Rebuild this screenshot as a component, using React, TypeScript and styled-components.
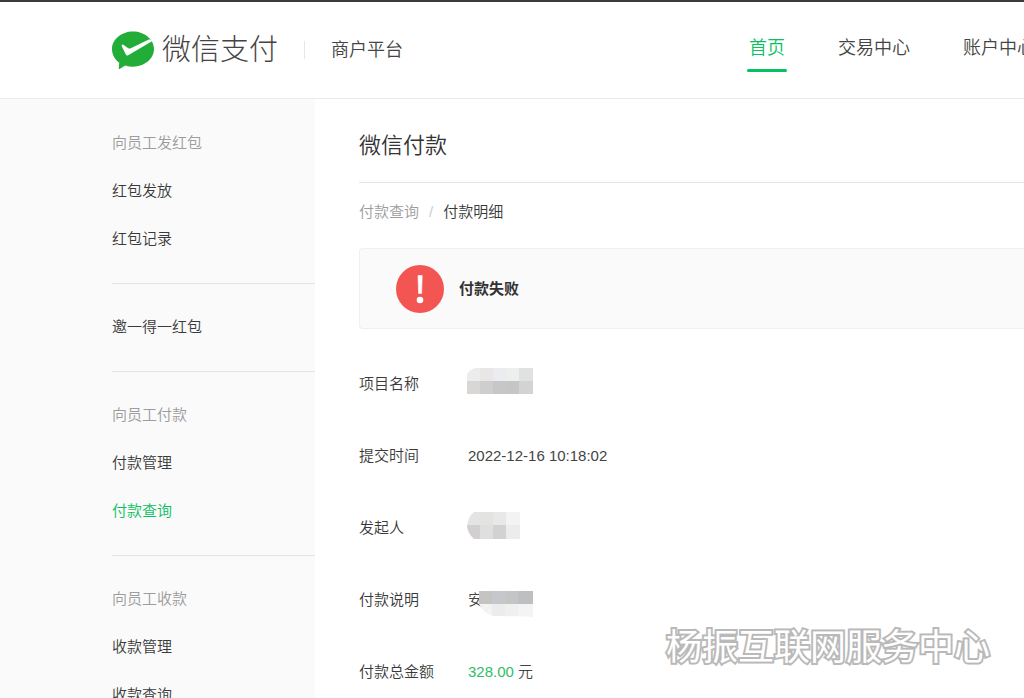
import React from "react";
import styled, { createGlobalStyle, css } from "styled-components";

const GlobalStyle = createGlobalStyle`
  *, *::before, *::after { box-sizing: border-box; }
  body {
    margin: 0;
    background: #fff;
    color: #444;
    font: 350 15px/24px "Liberation Sans", "Noto Sans CJK SC", sans-serif;
  }
  a { color: inherit; text-decoration: none; }
  ul, dl, dd, h1, h2, p { margin: 0; padding: 0; }
  ul { list-style: none; }
`;

const Page = styled.div`
  position: relative;
  display: flex;
  flex-direction: column;
  height: 100vh;
  overflow: hidden;
`;

const Header = styled.header`
  flex: none;
  overflow: hidden;
  border-top: 2px solid #3d3b40;
  border-bottom: 1px solid #e9e9ef;
`;

const HeaderInner = styled.div`
  display: flex;
  align-items: center;
  justify-content: space-between;
  min-width: 1037px;
  height: 96px;
  padding-left: 112px;
  white-space: nowrap;
`;

const Brand = styled.a`
  display: flex;
  align-items: center;
`;

const BrandName = styled.span`
  margin-left: 8px;
  font-size: 29px;
  font-weight: 300;
  line-height: 40px;
`;

const BrandDivider = styled.span`
  width: 1px;
  height: 18px;
  margin: 0 26px;
  background: #e6e6e6;
`;

const Platform = styled.span`
  font-size: 18px;
`;

const Nav = styled.nav`
  display: flex;
  gap: 49px;
`;

const NavLink = styled.a<{ $active?: boolean }>`
  position: relative;
  padding: 6px 2px 10px;
  font-size: 18px;
  line-height: 28px;
  ${({ $active }) =>
    $active &&
    css`
      color: #07c160;
      &::after {
        content: "";
        position: absolute;
        left: 0;
        right: 0;
        bottom: 0;
        height: 3px;
        border-radius: 2px;
        background: #07c160;
      }
    `}
`;

const Body = styled.div`
  display: flex;
  flex: 1;
  min-height: 0;
`;

const Sidebar = styled.aside`
  flex: 0 0 315px;
  padding: 1px 0 0 112px;
  background: #fafafa;
`;

const MenuGroup = styled.ul`
  display: flex;
  flex-direction: column;
  gap: 24px;
  padding: 31px 0 32px;
  border-bottom: 1px solid #e4e4e4;
`;

const MenuTitle = styled.li`
  color: #9c9c9c;
`;

const MenuItem = styled.li<{ $active?: boolean }>`
  color: ${({ $active }) => ($active ? "#07c160" : "#3a3a3a")};
`;

const Main = styled.main`
  flex: 1;
  min-width: 0;
  padding-left: 44px;
`;

const Title = styled.h1`
  padding: 31px 0 20px;
  border-bottom: 1px solid #e4e4e4;
  font-size: 22px;
  font-weight: 350;
  line-height: 32px;
  color: #333;
`;

const Breadcrumb = styled.nav`
  display: flex;
  gap: 10px;
  padding: 17px 0 24px;
  color: #3a3a3a;
`;

const CrumbLink = styled.a`
  color: #9c9c9c;
`;

const CrumbSlash = styled.span`
  color: #ccc;
`;

const Alert = styled.section`
  display: flex;
  align-items: center;
  gap: 15px;
  height: 81px;
  padding-left: 36px;
  border: 1px solid #f0f0f0;
  border-right: 0;
  border-radius: 4px 0 0 4px;
  background: #fafafa;
`;

const AlertText = styled.h2`
  font-size: 15px;
  font-weight: 700;
  color: #333;
`;

const Details = styled.dl`
  display: flex;
  flex-direction: column;
  gap: 48px;
  padding-top: 43px;
`;

const DetailRow = styled.div`
  display: grid;
  grid-template-columns: 108px 1fr;
  height: 24px;
`;

const Label = styled.dt`
  color: #3a3a3a;
`;

const Value = styled.dd`
  position: relative;
  && {
    padding-left: 1px;
  }
`;

const Amount = styled.span`
  color: #2ebd69;
`;

const MosaicSvg = styled.svg<{ $top: number; $left: number }>`
  position: absolute;
  top: ${({ $top }) => $top}px;
  left: ${({ $left }) => $left}px;
`;

const Watermark = styled.p`
  position: absolute;
  right: 34px;
  bottom: 32px;
  font: 400 36px/44px "Noto Sans CJK SC", sans-serif;
  color: #fff;
  white-space: nowrap;
  -webkit-text-stroke: 4px #b9b9b9;
  stroke-linejoin: round;
  paint-order: stroke fill;
`;

type MosaicProps = {
  cells: string[][];
  outline: string;
  top: number;
  left: number;
  id: string;
};

function Mosaic({ cells, outline, top, left, id }: MosaicProps) {
  return (
    <MosaicSvg $top={top} $left={left} width={66} height={27} aria-hidden="true">
      <clipPath id={id}>
        <path d={outline} />
      </clipPath>
      <g clipPath={`url(#${id})`} shapeRendering="crispEdges">
        {cells.map((row, y) =>
          row.map((fill, x) => (
            <rect key={`${x}-${y}`} x={x * 13} y={y * 13} width={14} height={14} fill={fill} />
          ))
        )}
      </g>
    </MosaicSvg>
  );
}

function PayLogo() {
  return (
    <svg width="42" height="38" viewBox="0 0 42 38" aria-hidden="true">
      <path
        fill="#22ac38"
        d="M21 .5C32.600 .5 42 8.400 42 18.100S32.600 35.700 21 35.700c-2.800 0-5.400-.4-7.800-1.200L7.600 37.900c-.5.3-.9 0-.8-.6l.5-5.500C2.800 28.600 0 23.700 0 18.100 0 8.400 9.400.5 21 .5z"
      />
      <path
        fill="#fff"
        d="M9.700 14.200c.4-.8 1.200-.8 1.900-.3l4.700 3.400c.7.4 1.300.4 2 .1L37.300 8.200l3.100 1.800L16.200 24.200c-1 .6-1.900.4-2.400-.6l-4-8.400c-.2-.4-.2-.7-.1-1z"
      />
    </svg>
  );
}

function FailIcon() {
  return (
    <svg width="48" height="48" viewBox="0 0 48 48" aria-hidden="true">
      <circle cx="24" cy="24" r="24" fill="#f35553" />
      <path fill="#fff" d="M22 10.500h4.200l-.6 18h-3z" stroke="#fff" strokeWidth=".6" strokeLinejoin="round" />
      <circle cx="24" cy="35" r="3.300" fill="#fff" />
    </svg>
  );
}

const menu = [
  { title: "向员工发红包", items: ["红包发放", "红包记录"] },
  { items: ["邀一得一红包"] },
  { title: "向员工付款", items: ["付款管理", "付款查询"] },
  { title: "向员工收款", items: ["收款管理", "收款查询"] },
];

export default function App() {
  return (
    <>
      <GlobalStyle />
      <Page>
        <Header>
          <HeaderInner>
            <Brand href="#">
              <PayLogo />
              <BrandName>微信支付</BrandName>
              <BrandDivider />
              <Platform>商户平台</Platform>
            </Brand>
            <Nav>
              <NavLink href="#" $active>首页</NavLink>
              <NavLink href="#">交易中心</NavLink>
              <NavLink href="#">账户中心</NavLink>
            </Nav>
          </HeaderInner>
        </Header>
        <Body>
          <Sidebar>
            {menu.map((group) => (
              <MenuGroup key={group.items[0]}>
                {group.title && <MenuTitle>{group.title}</MenuTitle>}
                {group.items.map((item) => (
                  <MenuItem key={item} $active={item === "付款查询"}>
                    <a href="#">{item}</a>
                  </MenuItem>
                ))}
              </MenuGroup>
            ))}
          </Sidebar>
          <Main>
            <Title>微信付款</Title>
            <Breadcrumb>
              <CrumbLink href="#">付款查询</CrumbLink>
              <CrumbSlash>/</CrumbSlash>
              <span>付款明细</span>
            </Breadcrumb>
            <Alert>
              <FailIcon />
              <AlertText>付款失败</AlertText>
            </Alert>
            <Details>
              <DetailRow>
                <Label>项目名称</Label>
                <Value>
                  <Mosaic
                    id="name"
                    top={-4}
                    left={0}
                    outline="M9 0H66V26H0V6Q3 1 9 0z"
                    cells={[
                      ["#ececec", "#e8e7e6", "#ebecef", "#eeeeee", "#e0e2e2"],
                      ["#d8d7d6", "#cecece", "#c6c7c9", "#c6c6c7", "#d2d3d5"],
                    ]}
                  />
                </Value>
              </DetailRow>
              <DetailRow>
                <Label>提交时间</Label>
                <Value>2022-12-16 10:18:02</Value>
              </DetailRow>
              <DetailRow>
                <Label>发起人</Label>
                <Value>
                  <Mosaic
                    id="sender"
                    top={-4}
                    left={0}
                    outline="M7 0H53V27H7Q1 22 0 14Q1 5 7 0z"
                    cells={[
                      ["#e4e4e4", "#e3e3e2", "#e8e8e8", "#f3f3f3"],
                      ["#d1cfd0", "#dfdfdf", "#d2d2d2", "#ececee"],
                    ]}
                  />
                </Value>
              </DetailRow>
              <DetailRow>
                <Label>付款说明</Label>
                <Value>
                  安
                  <Mosaic
                    id="note"
                    top={3}
                    left={12}
                    outline="M0 0H54V26Q40 25 14 25Q4 22 0 13z"
                    cells={[
                      ["#c5c4c3", "#c6c7cd", "#c5c5c5", "#bebfc1", "#bebfc1"],
                      ["#f3f3f3", "#ebeded", "#f0f0f0", "#f4f4f4", "#f4f4f4"],
                    ]}
                  />
                </Value>
              </DetailRow>
              <DetailRow>
                <Label>付款总金额</Label>
                <Value>
                  <Amount>328.00</Amount> 元
                </Value>
              </DetailRow>
            </Details>
          </Main>
        </Body>
        <Watermark>杨振互联网服务中心</Watermark>
      </Page>
    </>
  );
}
